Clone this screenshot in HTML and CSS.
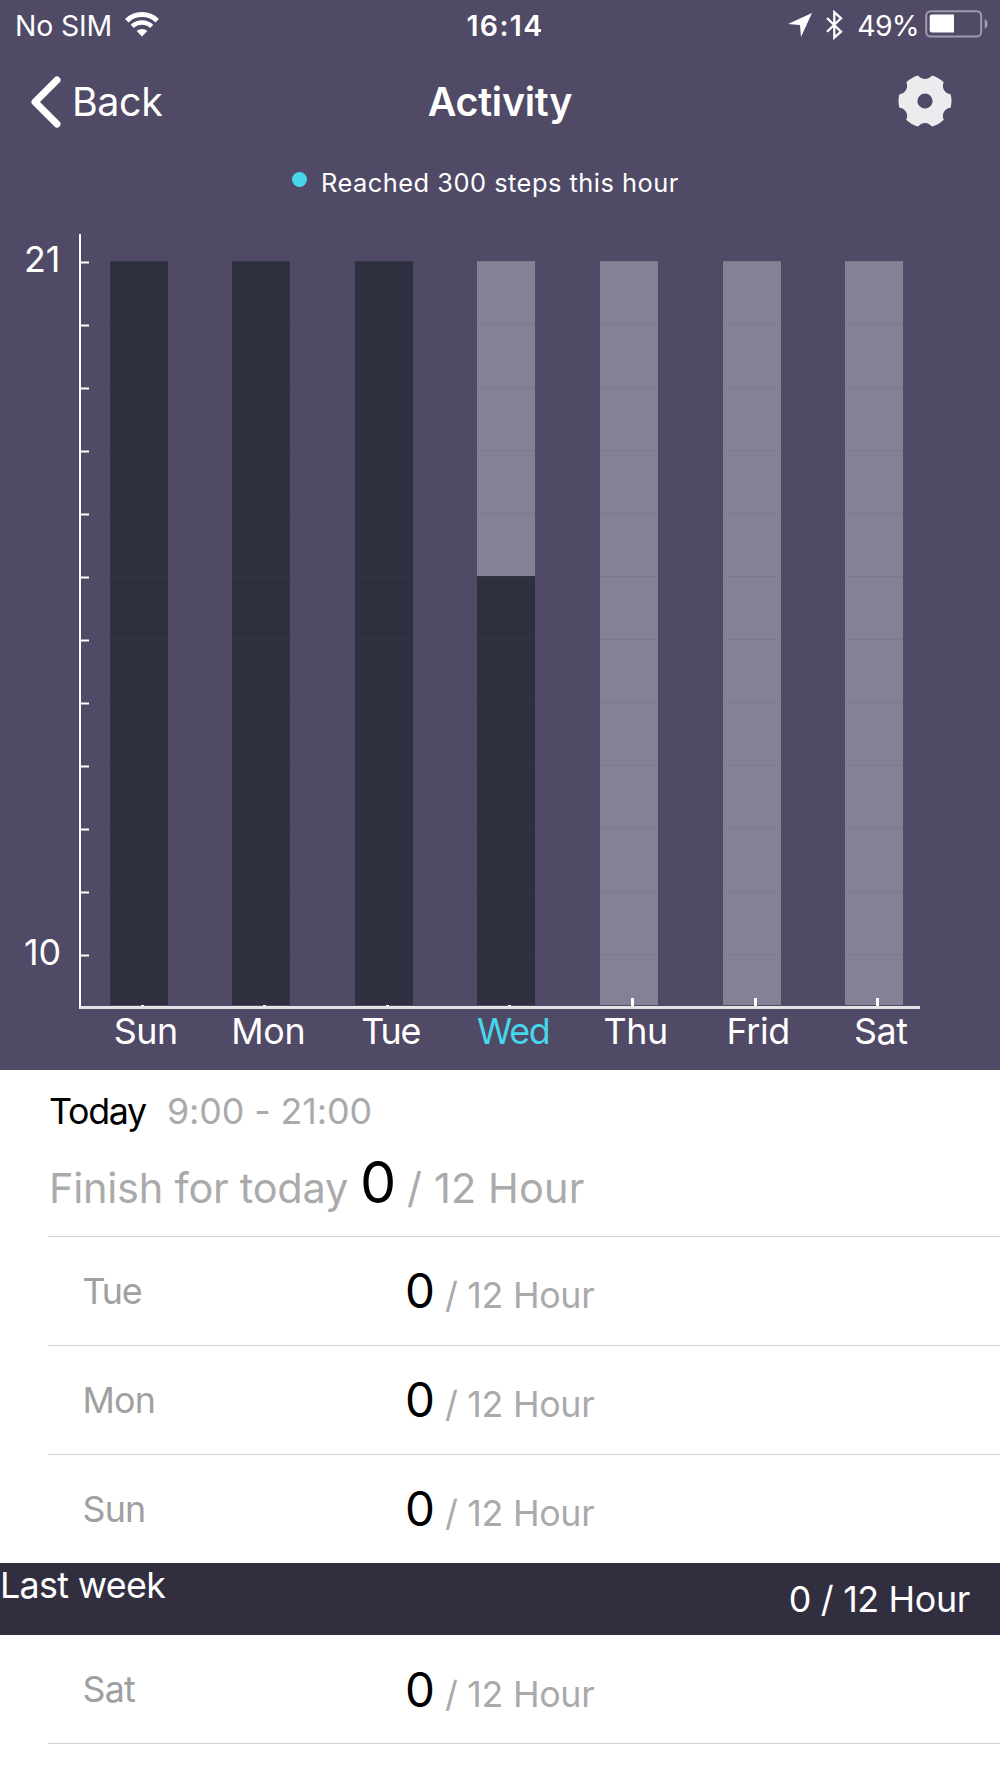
FILE: index.html
```html
<!DOCTYPE html>
<html lang="en">
<head>
    <meta charset="UTF-8">
    <meta name="viewport" content="width=device-width, initial-scale=1.0">
    <title>Activity</title>
    <link rel="stylesheet" href="styles.css">
</head>
<body>

    <div class="top-panel">
        <div class="status-bar">
            <div class="status-left">
                <span class="carrier">No SIM</span>
                <svg class="wifi" width="34" height="25" viewBox="0 0 34 25" fill="none" stroke="#fff">
                    <path d="M1.8 8.75A21.9 21.9 0 0 1 32.2 8.75" stroke-width="5"/>
                    <path d="M7.3 14.43A14 14 0 0 1 26.7 14.43" stroke-width="4.6"/>
                    <path d="M17 24.5L11.7 19.03A7.6 7.6 0 0 1 22.3 19.03Z" fill="#fff" stroke="none"/>
                </svg>
            </div>
            <div class="clock">16:14</div>
            <div class="status-right">
                <svg class="location" width="24" height="24" viewBox="0 0 24 24">
                    <path d="M24 0L0 11L12 12L13 24Z" fill="#fff"/>
                </svg>
                <svg class="bluetooth" width="17" height="30" viewBox="0 0 17 30">
                    <path d="M1 8L15 21.7L8.3 27.6V2.2L15 8.2L1 21.8" fill="none" stroke="#fff" stroke-width="2.3"/>
                </svg>
                <span class="percent">49%</span>
                <svg class="battery" width="63" height="28" viewBox="0 0 63 28">
                    <rect x="1.2" y="1.2" width="55" height="25.4" rx="4.5" fill="none" stroke="#fff" stroke-opacity="0.45" stroke-width="2"/>
                    <path d="M7 4.5H29V22.5H7A2.3 2.3 0 0 1 4.7 20.2V6.8A2.3 2.3 0 0 1 7 4.5Z" fill="#fff"/>
                    <path d="M59.7 9C63.7 10.5 63.7 17.3 59.7 18.8Z" fill="#fff" fill-opacity="0.45"/>
                </svg>
            </div>
        </div>

        <div class="nav-bar">
            <a class="back">
                <svg width="32" height="52" viewBox="0 0 32 52" fill="none" stroke="#fff" stroke-width="7" stroke-linecap="round" stroke-linejoin="round">
                    <path d="M27 4L5 26L27 48"/>
                </svg>
                <span>Back</span>
            </a>
            <h1 class="title">Activity</h1>
            <a class="settings">
                <svg width="54" height="54" viewBox="-27 -27 54 54">
                    <path fill="#ececee" fill-rule="evenodd" d="M25.6-6.86A26.5 26.5 0 0 1 25.6 6.86A8.2 8.2 0 0 0 18.74 18.74A26.5 26.5 0 0 1 6.86 25.6A8.2 8.2 0 0 0-6.86 25.6A26.5 26.5 0 0 1-18.74 18.74A8.2 8.2 0 0 0-25.6 6.86A26.5 26.5 0 0 1-25.6-6.86A8.2 8.2 0 0 0-18.74-18.74A26.5 26.5 0 0 1-6.86-25.6A8.2 8.2 0 0 0 6.86-25.6A26.5 26.5 0 0 1 18.74-18.74A8.2 8.2 0 0 0 25.6-6.86ZM7.6 0A7.6 7.6 0 1 0-7.6 0A7.6 7.6 0 1 0 7.6 0Z"/>
                </svg>
            </a>
        </div>

        <div class="legend">
            <span class="dot"></span>
            <span>Reached 300 steps this hour</span>
        </div>

        <div class="chart">
            <div class="y-labels">
                <span>21</span>
                <span>10</span>
            </div>
            <div class="plot">
                <div class="bar"><div class="fill" style="height: 744px"></div></div>
                <div class="bar"><div class="fill" style="height: 744px"></div></div>
                <div class="bar"><div class="fill" style="height: 744px"></div></div>
                <div class="bar"><div class="fill" style="height: 429px"></div></div>
                <div class="bar empty"></div>
                <div class="bar empty"></div>
                <div class="bar empty"></div>
            </div>
        </div>
        <div class="days">
            <span>Sun</span>
            <span>Mon</span>
            <span class="tight">Tue</span>
            <span class="tight current">Wed</span>
            <span>Thu</span>
            <span>Frid</span>
            <span>Sat</span>
        </div>
    </div>

    <div class="today">
        <div class="today-range">
            <span class="today-name">Today</span>
            <span class="range">9:00 - 21:00</span>
        </div>
        <div class="today-total">
            <span>Finish for today</span>
            <span class="big-count">0</span>
            <span class="today-goal">/ 12 Hour</span>
        </div>
    </div>

    <div class="row">
        <span class="day tight">Tue</span>
        <div class="total"><span class="count">0</span><span class="goal">/ 12 Hour</span></div>
    </div>
    <div class="row">
        <span class="day">Mon</span>
        <div class="total"><span class="count">0</span><span class="goal">/ 12 Hour</span></div>
    </div>
    <div class="row">
        <span class="day">Sun</span>
        <div class="total"><span class="count">0</span><span class="goal">/ 12 Hour</span></div>
    </div>

    <div class="week-header">
        <span class="week-name">Last week</span>
        <span class="week-total">0 / 12 Hour</span>
    </div>

    <div class="row last">
        <span class="day">Sat</span>
        <div class="total"><span class="count">0</span><span class="goal">/ 12 Hour</span></div>
    </div>

</body>
</html>
```
FILE: styles.css
```css
* {
    box-sizing: border-box;
}

body {
    margin: 0;
    background-color: #fff;
    font-family: Inter, "Liberation Sans", sans-serif;
    font-size: 35.8px;
    overflow: hidden;
}

svg {
    display: block;
    flex: none;
}

.top-panel {
    height: 1070px;
    background-color: #504a66;
    color: #fff;
}

/* status bar */
.status-bar {
    display: grid;
    grid-template-columns: 1fr auto 1fr;
    align-items: center;
    height: 51px;
    padding: 0 12px 0 15px;
    font-size: 28.4px;
}

.status-left,
.status-right {
    display: flex;
    align-items: center;
}

.status-right {
    justify-content: flex-end;
}

.carrier {
    letter-spacing: -0.15px;
}

.wifi {
    margin: 0 0 3px 13px;
}

.clock {
    margin-left: 7px;
    font-weight: 600;
    letter-spacing: 1.4px;
}

.location {
    margin: 0 14px 1px 0;
}

.bluetooth {
    margin: 0 14px 1px 0;
}

.percent {
    letter-spacing: -0.7px;
}

.battery {
    margin: 0 0 3px 6px;
}

/* navigation */
.nav-bar {
    display: grid;
    grid-template-columns: 1fr auto 1fr;
    align-items: center;
    height: 102px;
    padding: 0 48px 0 30px;
    font-size: 39.4px;
}

.back {
    display: flex;
    align-items: center;
    gap: 10px;
    letter-spacing: -0.4px;
}

.title {
    margin: 0 0 0 18px;
    font-size: 39.4px;
    font-weight: 600;
    letter-spacing: -0.25px;
}

.settings {
    justify-self: end;
    margin-bottom: 2px;
}

.legend {
    display: flex;
    align-items: center;
    gap: 14px;
    height: 60px;
    padding: 0 0 2px 292px;
    font-size: 25.4px;
    letter-spacing: 0.5px;
}

.dot {
    width: 15px;
    height: 15px;
    margin-bottom: 6px;
    border-radius: 50%;
    background-color: #46d7ec;
}

/* chart */
.chart {
    display: grid;
    grid-template-columns: 79px 841px;
    height: 796px;
    padding-top: 21px;
}

.y-labels {
    display: flex;
    flex-direction: column;
    justify-content: space-between;
    padding: 7px 0 39px 24px;
    line-height: 36px;
}

.plot {
    display: flex;
    align-items: flex-end;
    gap: 64.6px;
    padding: 0 0 1px 28.6px;
    border-left: 2px solid #fff;
    border-bottom: 3px solid #e4e3e8;
    /* hour ticks */
    background: linear-gradient(#a8a5b3 1px, #fff 1px, #fff 2px, #a8a5b3 2px, #a8a5b3 3px, transparent 3px) 0 27px / 8px 63px repeat-y;
}

.bar {
    position: relative;
    display: flex;
    flex: none;
    align-items: flex-end;
    width: 58px;
    height: 744px;
    background: #858093 linear-gradient(#7e798e 1px, transparent 1px) 0 0 / 58px 63px;
}

.bar::after {
    content: "";
    position: absolute;
    left: 31px;
    bottom: -1px;
    width: 3px;
    height: 1px;
    background-color: #fff;
}

.bar.empty::after {
    height: 8px;
}

.fill {
    width: 100%;
    background: #2e303f linear-gradient(#333545 1px, transparent 1px) 0 0 / 58px 63px;
}

.days {
    display: grid;
    grid-template-columns: repeat(7, 122.5px);
    padding: 4px 0 0 84.5px;
    line-height: 36px;
    letter-spacing: -0.35px;
    text-align: center;
}

.days .tight,
.day.tight {
    letter-spacing: -1.2px;
}

.days .current {
    color: #46d7ec;
}

/* today */
.today {
    height: 166px;
    padding: 19px 0 0 49px;
    color: #aaa;
}

.today-range {
    display: flex;
    gap: 21px;
    line-height: 44px;
}

.today-name {
    color: #000;
    letter-spacing: -1.3px;
}

.range {
    letter-spacing: -0.08px;
}

.today-total {
    display: flex;
    align-items: baseline;
    margin-top: 17px;
    font-size: 41.5px;
    line-height: 64px;
    letter-spacing: -0.25px;
}

.big-count {
    margin: 0 11px 0 12px;
    color: #000;
    font-size: 57.5px;
}

.today-goal {
    letter-spacing: 0.1px;
}

/* day list */
.row {
    display: grid;
    grid-template-columns: 322.5px 1fr;
    align-items: center;
    height: 109px;
    margin-left: 48px;
    padding-left: 34.5px;
    border-top: 1px solid #d2d2d2;
}

.row.last {
    border-top: none;
    border-bottom: 1px solid #d2d2d2;
}

.day {
    color: #a0a0a0;
    letter-spacing: -0.8px;
}

.total {
    display: flex;
    align-items: baseline;
    gap: 10px;
    padding-bottom: 2px;
}

.row.last .total {
    padding-bottom: 0;
}

.count {
    color: #000;
    font-size: 47.5px;
}

.goal {
    color: #aaa;
    letter-spacing: -0.3px;
}

.week-header {
    display: flex;
    justify-content: space-between;
    height: 72px;
    padding-right: 30px;
    background-color: #312e40;
    color: #fff;
}

.week-name {
    line-height: 44px;
    letter-spacing: -0.65px;
}

.week-total {
    line-height: 72px;
    letter-spacing: -0.33px;
}
```
